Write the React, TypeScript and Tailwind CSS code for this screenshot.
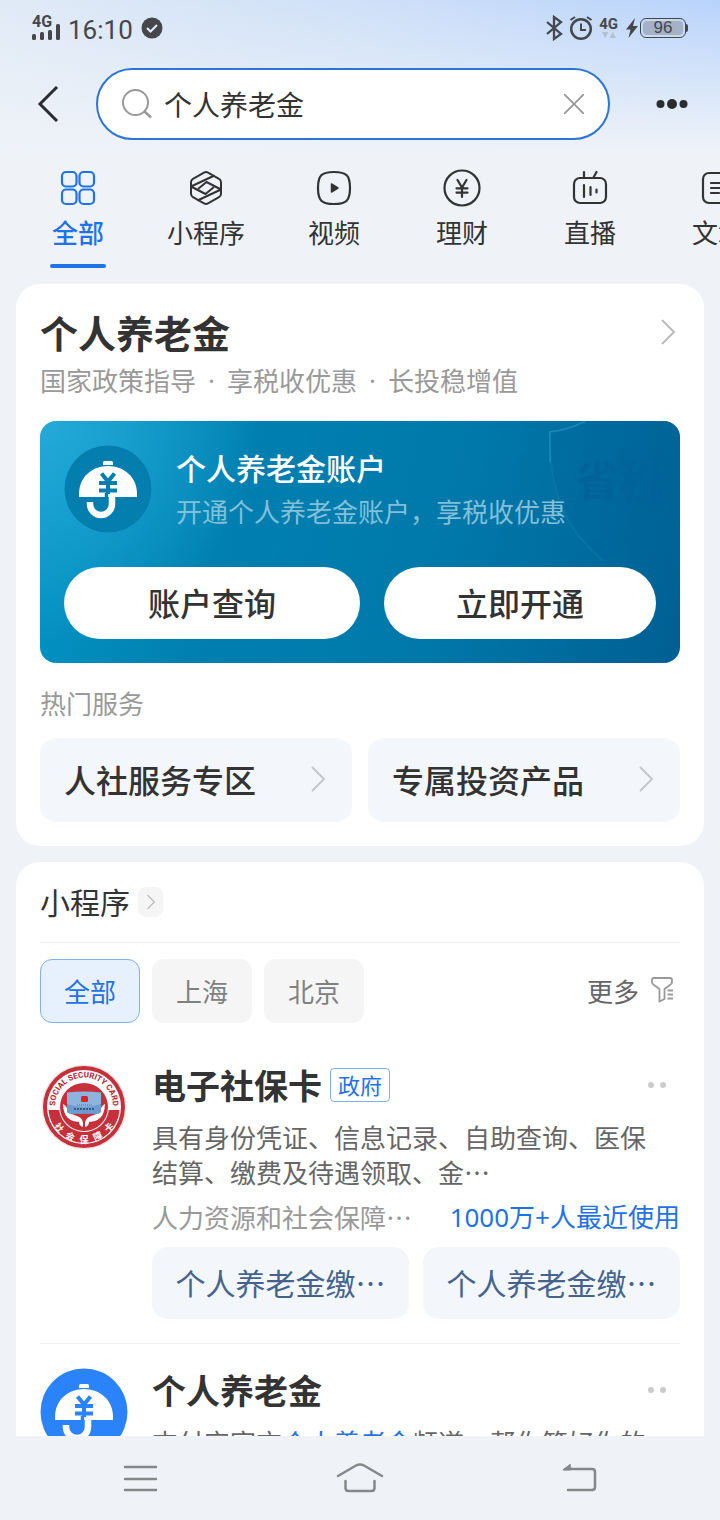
import type { ReactNode } from "react";
import cx from "clsx";

const TABS = [
  { id: "all", label: "全部", icon: <GridIcon /> },
  { id: "mini", label: "小程序", icon: <HexagonIcon /> },
  { id: "video", label: "视频", icon: <VideoIcon /> },
  { id: "finance", label: "理财", icon: <YuanIcon /> },
  { id: "live", label: "直播", icon: <LiveIcon /> },
  { id: "article", label: "文章", icon: <ArticleIcon /> },
];

const SERVICES = ["人社服务专区", "专属投资产品"];

const REGIONS = ["全部", "上海", "北京"];

function GridIcon() {
  return (
    <svg width="40" height="40" viewBox="0 0 40 40" fill="none" stroke="currentColor" strokeWidth="2.2">
      <rect x="4" y="4" width="14.500" height="14.500" rx="4" />
      <rect x="21.500" y="4" width="14.500" height="14.500" rx="4" />
      <rect x="4" y="21.500" width="14.500" height="14.500" rx="4" />
      <rect x="21.500" y="21.500" width="14.500" height="14.500" rx="4" />
    </svg>
  );
}

function HexagonIcon() {
  return (
    <svg width="40" height="40" viewBox="0 0 40 40" fill="none" stroke="currentColor" strokeWidth="2" strokeLinejoin="round">
      <path d="M18 4.600q2-1.100 4 0l11 6.200q2 1.100 2 3.400v11.600q0 2.300-2 3.400l-11 6.200q-2 1.100-4 0l-11-6.200q-2-1.100-2-3.400V14.200q0-2.300 2-3.400z" />
      <path d="M5 18.500L19.500 26L28 19M5 18.500L28.500 7.500" />
      <path d="M35 21.500L20.500 14L12 21M35 21.500L11.500 32.500" />
    </svg>
  );
}

function VideoIcon() {
  return (
    <svg width="40" height="40" viewBox="0 0 40 40" fill="none" stroke="currentColor" strokeWidth="2.2">
      <path d="M20 4c12.500 0 16 3.500 16 16s-3.500 16-16 16S4 32.500 4 20 7.500 4 20 4z" />
      <path d="M17.500 16v8l6.500-4z" fill="currentColor" strokeWidth="1.500" strokeLinejoin="round" />
    </svg>
  );
}

function YuanIcon() {
  return (
    <svg width="40" height="40" viewBox="0 0 40 40" fill="none" stroke="currentColor" strokeWidth="2.200" strokeLinecap="round">
      <circle cx="20" cy="20" r="17.500" />
      <path d="M15.500 12l4.500 7.500 4.500-7.500M20 19.500V29M14.500 20.300h11M14.500 24.600h11" />
    </svg>
  );
}

function LiveIcon() {
  return (
    <svg width="40" height="40" viewBox="0 0 40 40" fill="none" stroke="currentColor" strokeWidth="2.200" strokeLinecap="round">
      <rect x="4" y="10" width="32" height="25" rx="6" />
      <path d="M14 4v5M26.500 4L23.500 9.500M14 17v12M20.500 19v8M26.500 21.500v3" />
    </svg>
  );
}

function ArticleIcon() {
  return (
    <svg width="40" height="40" viewBox="0 0 40 40" fill="none" stroke="currentColor" strokeWidth="2.200" strokeLinecap="round">
      <rect x="5" y="5" width="30" height="30" rx="6" />
      <path d="M13 15h14M13 20h14M13 25h8" />
    </svg>
  );
}

function Chevron({ className }: { className?: string }) {
  return (
    <svg className={className} viewBox="0 0 16 28" fill="none" stroke="currentColor" strokeWidth="2">
      <path d="M2 2l12 12L2 26" />
    </svg>
  );
}

function UmbrellaIcon({ className, color }: { className?: string; color: string }) {
  return (
    <svg className={className} viewBox="0 0 88 88" fill="none">
      <circle cx="44" cy="44" r="43.500" fill={color} />
      <path d="M39 17.500a1.500 1.500 0 0 1 1.500-1.500h7a1.500 1.500 0 0 1 1.500 1.500V20H39z" fill="#fff" />
      <path d="M15 49c0-17 13-28 29-28s29 11 29 28v3H15z" fill="#fff" />
      <path d="M37.500 28.500l6.500 8 6.500-8M35 38h18M35 45.500h18M44 37v12" stroke={color} strokeWidth="4" />
      <path d="M42.500 48v5" stroke={color} strokeWidth="3.500" />
      <path d="M48 50v9a11 11 0 0 1-22 0v-2" stroke="#fff" strokeWidth="6.500" />
    </svg>
  );
}

function SocialSecurityLogo() {
  return (
    <svg className="size-[88px]" viewBox="0 0 88 88" fill="none">
      <defs>
        <path id="ring-top" d="M16 51A29 29 0 1 1 72 51" />
        <path id="ring-bottom" d="M8.500 44A35.500 35.500 0 0 0 79.500 44" />
      </defs>
      <circle cx="44" cy="44" r="42.500" fill="#f0e4e4" />
      <circle cx="44" cy="44" r="41" fill="#c5303b" />
      <circle cx="44" cy="44" r="37" fill="#fff" />
      <path d="M8.500 47a35.600 35.600 0 0 0 71 0z" fill="#c5303b" />
      <circle cx="44" cy="44" r="25" fill="#fff" />
      <circle cx="44" cy="44" r="24" fill="#c5303b" />
      <path d="M23 41q4 2 6 9l8 3q7 2 6 11-4-1-4-5-11-1-14-8-2-5-2-10zM65 41q-4 2-6 9l-8 3q-7 2-6 11 4-1 4-5 11-1 14-8 2-5 2-10z" fill="#fff" />
      <path d="M27 29.500q17-2 34 0v18q0 3-3 3H30q-3 0-3-3z" fill="#8db4dd" />
      <path d="M27 41q17 6 34 0v6.500q0 3-3 3H30q-3 0-3-3z" fill="#6c9bd0" />
      <rect x="41" y="33" width="7" height="6" rx="1.500" fill="#d8232c" />
      <path d="M37 42h15" stroke="#55739f" strokeWidth="1" strokeDasharray="1 1" />
      <path d="M34 46h21" stroke="#27476f" strokeWidth="1.500" strokeDasharray="2 1" />
      <text className="font-['Roboto',sans-serif] text-[8px] font-bold" fill="#b3242f" textAnchor="middle">
        <textPath href="#ring-top" startOffset="50%">
          SOCIAL SECURITY CARD
        </textPath>
      </text>
      <text className="font-['Noto_Sans_CJK_SC',sans-serif] text-[9px] font-bold" fill="#fff" textAnchor="middle">
        <textPath href="#ring-bottom" startOffset="50%">
          {"社\u2002 会\u2002 保\u2002 障\u2002 卡"}
        </textPath>
      </text>
    </svg>
  );
}

function StatusBar() {
  return (
    <div className="flex h-14 items-center justify-between px-8 text-[#45474b]">
      <div className="flex items-center">
        <div className="relative h-6 w-7">
          <span className="absolute left-0 top-0 font-['Roboto',sans-serif] text-base leading-3 font-bold">4G</span>
          <svg className="absolute bottom-0 left-0" width="28" height="16" viewBox="0 0 28 16" fill="currentColor">
            <rect x="0" y="10" width="4" height="6" rx="1.500" />
            <rect x="8" y="8" width="4" height="8" rx="1.500" />
            <rect x="16" y="6" width="4" height="10" rx="1.500" />
            <rect x="24" y="0" width="4" height="16" rx="1.500" />
          </svg>
        </div>
        <span className="ml-2 mt-1 font-['Roboto',sans-serif] text-[26px] leading-8">16:10</span>
        <svg className="ml-2" width="22" height="22" viewBox="0 0 22 22">
          <circle cx="11" cy="11" r="10.500" fill="currentColor" />
          <path d="M6 11l3.500 3.500L16 8" fill="none" stroke="#e6eefa" strokeWidth="2" />
        </svg>
      </div>
      <div className="flex items-center">
        <svg width="18" height="26" viewBox="0 0 18 26" fill="none" stroke="currentColor" strokeWidth="2.300">
          <path d="M2 7l14 12-7 5V2l7 5L2 19" />
        </svg>
        <svg className="ml-1.5" width="24" height="26" viewBox="0 0 24 26" fill="none" stroke="currentColor" strokeWidth="2.500">
          <circle cx="12" cy="14" r="9.800" />
          <path d="M12 8.500V15h5M1.500 5L6 2M22.500 5L18 2" strokeWidth="2" />
        </svg>
        <div className="ml-1.5 flex flex-col items-center">
          <span className="font-['Roboto',sans-serif] text-[15px] leading-3.5 font-bold">4G</span>
          <svg width="14" height="8" viewBox="0 0 14 8" fill="#b2bfcf">
            <path d="M0 1h6.500L3.200 7zM7.500 7H14l-3.300-6z" />
          </svg>
        </div>
        <svg className="ml-2" width="12" height="20" viewBox="0 0 12 20" fill="currentColor">
          <path d="M9 0L0 11.500h4.500L2.500 20 12 8H7z" />
        </svg>
        <div className="ml-0.5 flex h-5 w-[46px] rounded-md border border-current p-0.5">
          <span className="flex flex-1 items-center justify-center rounded-sm bg-[#a5b1c4] font-['Liberation_Sans',sans-serif] text-[17px] leading-4">
            96
          </span>
        </div>
        <span className="h-2 w-0.5 rounded-r-sm bg-current" />
      </div>
    </div>
  );
}

function SearchHeader() {
  return (
    <div className="flex h-24 items-center">
      <button type="button" aria-label="返回" className="flex w-24 shrink-0 justify-center text-[#2b2c2e]">
        <svg width="24" height="36" viewBox="0 0 24 36" fill="none" stroke="currentColor" strokeWidth="3">
          <path d="M21 1L4 18l17 17" />
        </svg>
      </button>
      <form className="flex h-18 min-w-0 flex-1 items-center rounded-full border-2 border-[#2b74d8] bg-white px-6">
        <svg className="shrink-0 text-[#999]" width="30" height="30" viewBox="0 0 30 30" fill="none" stroke="currentColor" strokeWidth="2">
          <circle cx="13.500" cy="13.500" r="12.500" />
          <path d="M22.500 22.500l6.500 6" strokeWidth="2.500" />
        </svg>
        <input
          type="text"
          aria-label="搜索"
          defaultValue="个人养老金"
          className="ml-3 min-w-0 flex-1 bg-transparent text-[28px] leading-10 text-[#333] outline-none"
        />
        <button type="button" aria-label="清空" className="shrink-0 text-[#999]">
          <svg width="20" height="20" viewBox="0 0 20 20" fill="none" stroke="currentColor" strokeWidth="1.800">
            <path d="M0 0l20 20M20 0L0 20" />
          </svg>
        </button>
      </form>
      <button type="button" aria-label="更多选项" className="flex w-[110px] shrink-0 justify-center pl-3.5 text-[#2b2c2e]">
        <svg width="32" height="10" viewBox="0 0 32 10" fill="currentColor">
          <circle cx="4.500" cy="5" r="4" />
          <circle cx="16" cy="5" r="5" />
          <circle cx="27.500" cy="5" r="4" />
        </svg>
      </button>
    </div>
  );
}

function TabsView() {
  return (
    <nav className="flex h-[132px] overflow-hidden pl-3.5 pt-4">
      {TABS.map(({ id, label, icon }, index) => {
        const active = index === 0;
        return (
          <a
            key={id}
            href={`#${id}`}
            className={cx(
              "flex w-32 shrink-0 flex-col items-center",
              active ? "text-[#1f72e8] font-medium" : "text-[#333]"
            )}
          >
            {icon}
            <span className="mt-1.5 text-[26px] leading-9">{label}</span>
            {active && <span className="mt-3.5 h-1 w-14 rounded-full bg-[#1f72e8]"></span>}
          </a>
        );
      })}
    </nav>
  );
}

function PensionCard() {
  return (
    <section className="rounded-3xl bg-white px-6 pb-6 pt-5">
      <div className="flex items-center justify-between">
        <h1 className="text-[38px] leading-14 font-bold text-[#333]">个人养老金</h1>
        <Chevron className="mr-1 h-7 w-4 text-[#bbb]" />
      </div>
      <p className="flex gap-3 text-[26px] leading-10 text-[#999]">
        <span>国家政策指导</span>
        <span className="font-['Noto_Sans',sans-serif]">·</span>
        <span>享税收优惠</span>
        <span className="font-['Noto_Sans',sans-serif]">·</span>
        <span>长投稳增值</span>
      </p>
      <div className="relative mt-[21px] overflow-hidden rounded-2xl bg-[radial-gradient(circle_at_top_left,#25a9d8_0%,transparent_32%),linear-gradient(105deg,#0397c8_0%,#0080b0_30%,#0079aa_62%,#005f93_100%)] p-6">
        <svg className="absolute right-0 top-0" width="136" height="140" viewBox="0 0 136 140" fill="none">
          <path d="M42 0Q24 9 6 11c0 50 8 92 54 129" stroke="#1280ad" strokeWidth="2" opacity=".5" />
          <path d="M42 0Q24 9 6 11v30" stroke="#2a9fc6" strokeWidth="1.500" opacity=".6" />
          <path d="M42 0Q24 9 6 11c0 50 8 92 54 129 40-25 66-60 76-90V0z" fill="#00649a" opacity=".25" />
          <text x="31" y="76" fill="#00629a" opacity=".6" className="text-[44px] font-bold">
            省税
          </text>
        </svg>
        <div className="relative flex gap-6">
          <UmbrellaIcon className="size-[88px] shrink-0" color="#047eae" />
          <div>
            <h2 className="mt-0.5 text-[30px] leading-10 font-medium text-white">个人养老金账户</h2>
            <p className="mt-1 text-[26px] leading-10 text-[#81c0da]">开通个人养老金账户，享税收优惠</p>
          </div>
        </div>
        <div className="relative mt-[34px] grid grid-cols-[37fr_34fr] gap-6">
          <button type="button" className="h-18 rounded-full bg-white pb-0.5 text-[32px] font-medium text-[#333]">
            账户查询
          </button>
          <button type="button" className="h-18 rounded-full bg-white pb-0.5 text-[32px] font-medium text-[#333]">
            立即开通
          </button>
        </div>
      </div>
      <h3 className="mt-[22px] text-[26px] leading-9 text-[#999]">热门服务</h3>
      <div className="mt-[17px] grid grid-cols-2 gap-4">
        {SERVICES.map((name) => (
          <a key={name} href="#service" className="flex h-[84px] items-center justify-between rounded-2xl bg-[#f3f7fc] pb-0.5 pl-6 pr-[26px]">
            <span className="text-[32px] font-medium text-[#333]">{name}</span>
            <Chevron className="h-7 w-4 text-[#c4c6ca]" />
          </a>
        ))}
      </div>
    </section>
  );
}

function AppItem({
  icon,
  title,
  tag,
  children,
}: {
  icon: ReactNode;
  title: string;
  tag?: string;
  children: ReactNode;
}) {
  return (
    <div className="flex gap-6">
      <div className="shrink-0">{icon}</div>
      <div className="min-w-0 flex-1">
        <div className="flex h-11 items-center">
          <h3 className="text-[34px] leading-11 font-bold text-[#333]">{title}</h3>
          {tag && (
            <span className="ml-2 flex h-[34px] items-center rounded-sm border border-[#7eafe6] px-[7px] pb-0.5 text-[22px] text-[#1f72e8]">
              {tag}
            </span>
          )}
          <button type="button" aria-label="更多操作" className="ml-auto mr-3.5 flex gap-1.5">
            <span className="size-1.5 rounded-full bg-[#ccc]"></span>
            <span className="size-1.5 rounded-full bg-[#ccc]"></span>
          </button>
        </div>
        {children}
      </div>
    </div>
  );
}

function MiniProgramCard() {
  return (
    <section className="rounded-t-3xl bg-white px-6">
      <div className="box-content flex h-20 items-center border-b border-[#eee]">
        <h2 className="pb-0.5 text-[30px] text-[#333]">小程序</h2>
        <a href="#mini" aria-label="全部小程序" className="ml-2 flex h-[30px] w-[25px] items-center justify-center rounded-lg bg-[#f5f5f5]">
          <Chevron className="h-4 w-2.5 text-[#b5b5b5]" />
        </a>
      </div>
      <div className="mt-4 flex items-center gap-3">
        {REGIONS.map((region, index) => (
          <button
            key={region}
            type="button"
            aria-pressed={index === 0}
            className={cx(
              "h-16 w-[100px] rounded-xl pb-0.5 text-[26px]",
              index === 0 ? "border border-[#82b0ea] bg-[#e7f1fe] text-[#1f72e8]" : "bg-[#f5f5f5] text-[#808080]"
            )}
          >
            {region}
          </button>
        ))}
        <button type="button" className="ml-auto mr-1.5 flex items-center gap-3 pb-0.5 text-[26px] text-[#666]">
          更多
          <svg width="23" height="26" viewBox="0 0 23 26" fill="none" stroke="#999" strokeWidth="1.800">
            <path d="M1 3q0-2 2-2h16q2 0 2 2v2q0 2-2 3l-5.500 4v10l-5 2.500V12L3 8Q1 7 1 5z" strokeLinejoin="round" />
            <path d="M16.500 13.500H22M16.500 17.500H22M16.500 21.500H22" />
          </svg>
        </button>
      </div>
      <div className="mt-10 border-b border-[#eee] pb-6">
        <AppItem icon={<SocialSecurityLogo />} title="电子社保卡" tag="政府">
          <p className="mt-3 pr-6 text-[26px] leading-[35px] text-[#666]">
            具有身份凭证、信息记录、自助查询、医保结算、缴费及待遇领取、金…
          </p>
          <p className="mt-2.5 flex justify-between text-[26px] leading-9">
            <span className="text-[#999]">人力资源和社会保障…</span>
            <span className="font-['Noto_Sans','Noto_Sans_CJK_SC',sans-serif] text-[#1f72e8]">1000万+人最近使用</span>
          </p>
          <div className="mt-3 grid grid-cols-2 gap-3.5">
            <button type="button" className="h-18 rounded-2xl bg-[#f3f7fc] pb-0.5 text-[30px] text-[#46638f]">
              个人养老金缴…
            </button>
            <button type="button" className="h-18 rounded-2xl bg-[#f3f7fc] pb-0.5 text-[30px] text-[#46638f]">
              个人养老金缴…
            </button>
          </div>
        </AppItem>
      </div>
      <div className="pt-6">
        <AppItem icon={<UmbrellaIcon className="size-[88px]" color="#2b83fb" />} title="个人养老金">
          <p className="mt-3 pr-6 text-[26px] leading-[35px] text-[#666]">
            支付宝官方<span className="text-[#1f72e8]">个人养老金</span>频道，帮你管好你的
          </p>
        </AppItem>
      </div>
    </section>
  );
}

function SystemNav() {
  return (
    <nav className="flex h-[84px] shrink-0 items-center justify-around bg-[#eff3f8] px-[30px] text-[#858789]">
      <button type="button" aria-label="最近任务">
        <svg width="48" height="32" viewBox="0 0 48 32" fill="none" stroke="currentColor" strokeWidth="2.500" strokeLinecap="round">
          <path d="M9 5h31M9 17h31M9 28h31" />
        </svg>
      </button>
      <button type="button" aria-label="主屏幕">
        <svg width="48" height="32" viewBox="0 0 48 32" fill="none" stroke="currentColor" strokeWidth="2.500" strokeLinecap="round">
          <path d="M2 14L20 3.500q4-2 8 0l18 10.500M9.500 19v7q0 3 3 3h23q3 0 3-3v-7" />
        </svg>
      </button>
      <button type="button" aria-label="返回上一页">
        <svg width="48" height="32" viewBox="0 0 48 32" fill="none" stroke="currentColor" strokeWidth="2.500" strokeLinecap="round">
          <path d="M9 7h27q3 0 3 3v15q0 3-3 3H12" />
          <path d="M14 2.500L7 8H14z" fill="currentColor" strokeWidth="1" strokeLinejoin="round" />
        </svg>
      </button>
    </nav>
  );
}

export default function App() {
  return (
    <div className="flex h-screen flex-col overflow-hidden bg-[#eff3f8] font-['Noto_Sans_CJK_SC',sans-serif]">
      <div className="shrink-0 bg-[linear-gradient(to_bottom,transparent_0%,#eff3f8_100%),linear-gradient(to_right,#e0eaf6_0%,#cfe0f8_50%,#b8d3fb_100%)]">
        <StatusBar />
        <SearchHeader />
      </div>
      <TabsView />
      <main className="flex min-h-0 flex-1 flex-col gap-4 overflow-hidden px-4 *:shrink-0">
        <PensionCard />
        <MiniProgramCard />
      </main>
      <SystemNav />
    </div>
  );
}
